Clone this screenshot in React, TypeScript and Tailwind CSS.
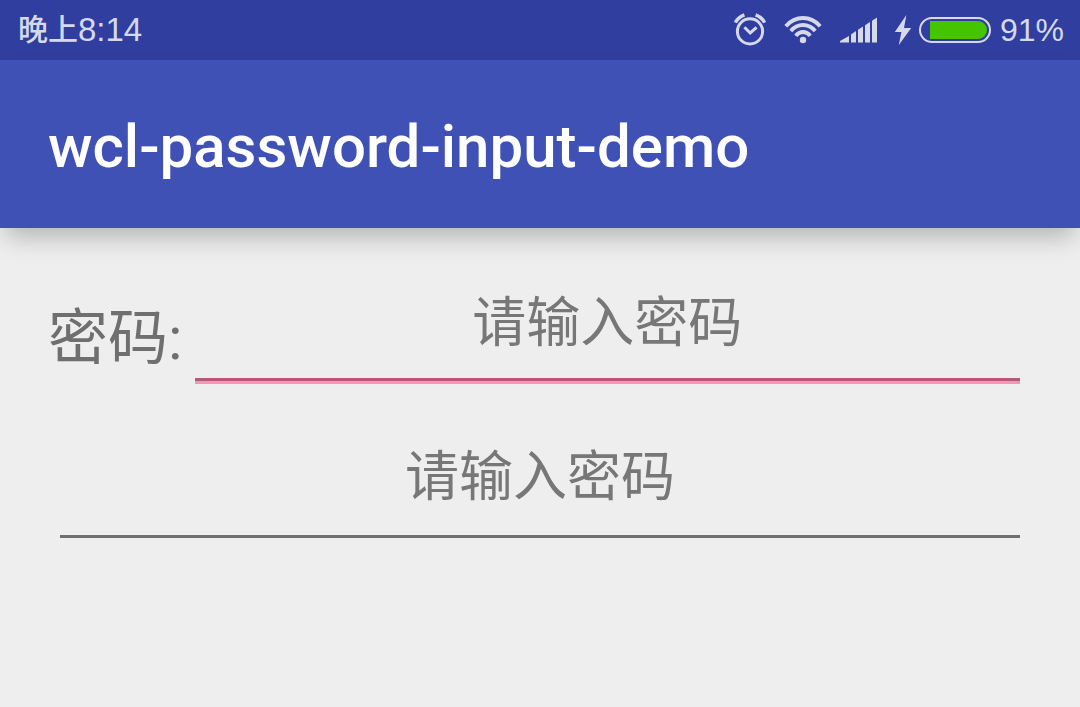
import React from 'react';

function AlarmIcon() {
  return (
    <svg width="34" height="34" viewBox="0 0 34 34" fill="none" stroke="currentColor" aria-hidden="true">
      <circle cx="16" cy="18.4" r="12.6" strokeWidth="3" />
      <path d="M10.4 14.2l5.8 5.8 6.4-5.6" strokeWidth="3" />
      <path d="M1.4 9.6Q3.8 4.4 10.4 1.8M30.6 9.6Q28.2 4.4 21.6 1.8" strokeWidth="3.4" />
    </svg>
  );
}

function WifiIcon() {
  return (
    <svg width="40" height="30" viewBox="0 0 40 30" fill="none" stroke="currentColor" strokeWidth="3.8" aria-hidden="true">
      <path d="M1.8 11.2Q9 3 19 3T36.2 11.2" />
      <path d="M6.8 16Q11.8 10 19 10T31.2 16" />
      <path d="M11.8 20.8Q14.6 17 19 17T26.2 20.8" />
      <circle cx="19" cy="25" r="3.2" fill="currentColor" stroke="none" />
    </svg>
  );
}

function SignalIcon() {
  return (
    <svg width="38" height="26" viewBox="0 0 38 26" fill="currentColor" aria-hidden="true">
      <path d="M0 25.6V24L9 19v6.6z" />
      <path d="M11 17.5L16 14v11.6h-5z" />
      <path d="M18 12.8L23 9.4v16.2h-5z" />
      <path d="M25 8.2L30 5v20.6h-5z" />
      <path d="M32 3.8L37 .6v25h-5z" />
    </svg>
  );
}

function BatteryIcon() {
  return (
    <svg width="98" height="30" viewBox="0 0 98 30" aria-hidden="true">
      <path d="M12.4 0L.8 17H7.4L4.8 30 17.2 13H10z" fill="currentColor" />
      <rect x="26" y="3" width="70" height="24" rx="12" fill="none" stroke="currentColor" strokeWidth="2" />
      <path d="M36 6h48a9 9 0 0 1 0 18H36z" fill="#47c400" />
    </svg>
  );
}

const fieldText =
  "block w-full bg-transparent text-center text-[54px] leading-[64px] text-[#6d6d6d] caret-transparent outline-none placeholder:text-[#777777] placeholder:opacity-100";

export default function App() {
  return (
    <div className="min-h-screen bg-[#eeeeee] font-['Roboto','Noto_Sans_CJK_SC',sans-serif]">
      <div className="flex h-[60px] items-center justify-between bg-[#303f9f] pr-4 pl-[18px] font-['Liberation_Sans','Noto_Sans_CJK_SC',sans-serif] text-[33px] leading-[60px] text-[#d6d9ec]">
        <div className="flex items-center">
          <span className="text-[30px] font-medium">晚上</span>
          <span>8:14</span>
        </div>
        <div className="flex items-center">
          <AlarmIcon />
          <span className="ml-4"><WifiIcon /></span>
          <span className="ml-4"><SignalIcon /></span>
          <span className="ml-4"><BatteryIcon /></span>
          <span className="ml-2 text-[32px]">91%</span>
        </div>
      </div>
      <header className="flex h-[168px] items-center bg-[#3f51b5] px-12 pt-[6px] shadow-[0_14px_24px_-6px_rgba(0,0,0,0.26)]">
        <h1 className="text-[60px] leading-[72px] font-medium text-white">wcl-password-input-demo</h1>
      </header>
      <main className="px-12 pt-16">
        <div className="flex items-start">
          <label htmlFor="password" className="pt-3 text-[60px] leading-[70px] text-[#6f6f6f]">
            密码:
          </label>
          <div className="mx-3 min-w-0 flex-1 border-b-3 border-[#f596b4]">
            <div className="border-b-3 border-[#b85878] pb-[22px]">
              <input id="password" type="password" placeholder="请输入密码" className={fieldText} />
            </div>
          </div>
        </div>
        <div className="mx-3 mt-[62px] border-b-3 border-[#6f6f6f] pb-[25px]">
          <input type="password" aria-label="请输入密码" placeholder="请输入密码" className={fieldText} />
        </div>
      </main>
    </div>
  );
}
